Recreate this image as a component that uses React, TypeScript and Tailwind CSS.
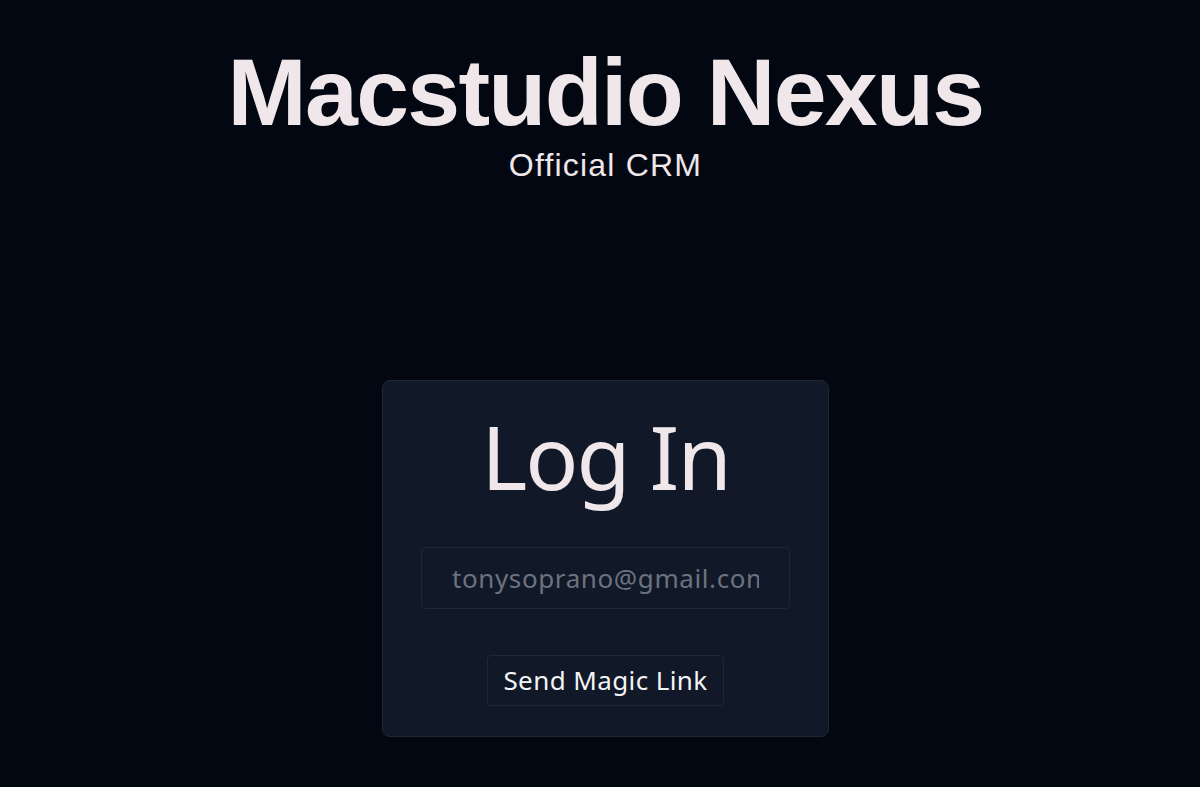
export default function App() {
  return (
    <div className="min-h-screen bg-[#030712] text-[#efe7ea] flex flex-col items-center pl-[11px] font-['Liberation_Sans',sans-serif]">
      {/* Brand header */}
      <header className="flex flex-col items-center pt-[45px]">
        <h1 className="text-[95px] leading-none font-bold tracking-[-1.7px]">Macstudio Nexus</h1>
        <p className="text-[32px] leading-none tracking-[1.2px] mt-[9px]">Official CRM</p>
      </header>

      {/* Login card */}
      <div className="mt-[199px] w-[447px] h-[357px] rounded-lg border border-[#1c2830] bg-[#111827] flex flex-col items-center font-['Noto_Sans',sans-serif]">
        <h2 className="text-[88px] leading-none font-normal tracking-[-2px] mt-[31px]">Log In</h2>
        <input
          type="email"
          placeholder="tonysoprano@gmail.com"
          className="mt-[47px] w-[369px] h-[62px] rounded border border-[#1c2a30] bg-[#111827] px-[30px] text-[26px] tracking-[0.6px] text-[#efe7ea] placeholder:text-[#6b7280] outline-none"
        />
        <button className="mt-[46px] h-[51px] px-[15px] rounded border border-[#1c2a30] bg-[#111827] text-[26px] tracking-[0.4px] text-[#f3f4f6]">
          Send Magic Link
        </button>
      </div>
    </div>
  );
}
